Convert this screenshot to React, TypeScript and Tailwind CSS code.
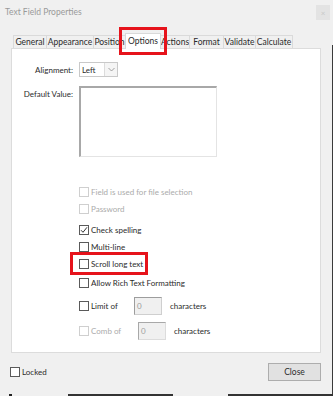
import React from 'react';

const tabs: [string, number][] = [
  ['General', 34],
  ['Appearance', 48],
  ['Position', 33],
  ['Options', 36],
  ['Actions', 30],
  ['Format', 35],
  ['Validate', 33],
  ['Calculate', 38],
];

const Box = ({ checked = false, disabled = false }: { checked?: boolean; disabled?: boolean }) => (
  <span
    className={`w-[10px] h-[10px] shrink-0 border bg-white flex items-center justify-center ${
      disabled ? 'border-[#cfcfcf]' : 'border-[#5a5a5a]'
    }`}
  >
    {checked && (
      <svg width="8" height="8" viewBox="0 0 8 8">
        <path d="M1 4.2 L3 6.3 L7 1.3" fill="none" stroke="#333" strokeWidth="1" />
      </svg>
    )}
  </span>
);

const CheckRow = ({
  label,
  checked,
  disabled,
  className = '',
}: {
  label: string;
  checked?: boolean;
  disabled?: boolean;
  className?: string;
}) => (
  <div className={`flex items-center h-[17px] gap-[2px] ${className}`}>
    <Box checked={checked} disabled={disabled} />
    <span className={disabled ? 'text-[#ababab]' : 'text-[#2b2b2b]'}>{label}</span>
  </div>
);

const App = () => {
  return (
    <div
      className="w-[333px] h-[396px] bg-[#f0f0f0] relative overflow-hidden text-[8px] text-[#2b2b2b]"
      style={{ fontFamily: 'Lato, "Noto Sans", sans-serif' }}
    >
      {/* title bar */}
      <div className="h-[25px] flex items-center justify-between pl-[5px] pr-[3px]">
        <span className="text-[8.5px] text-[#9a9a9a]">Text Field Properties</span>
        <div className="w-[14px] h-[15px] bg-[#e3e3e3] flex items-center justify-center text-[8px] text-[#c8c8c8]">
          ×
        </div>
      </div>

      {/* tabs */}
      <div className="flex items-end h-[23px] pl-[13px] text-[8.5px]">
        {tabs.map(([t, w]) =>
          t === 'Options' ? (
            <div
              key={t}
              style={{ width: w }}
              className="relative h-[16px] bg-white border border-b-0 border-[#d9d9d9] flex items-center justify-center -ml-px -mb-px z-10"
            >
              {t}
              <div className="absolute -left-[7px] -right-[7px] -top-[7px] -bottom-[6px] border-[3px] border-[#e6131b]" />
            </div>
          ) : (
            <div
              key={t}
              style={{ width: w }}
              className="h-[13px] bg-[#f0f0f0] border border-b-0 border-[#dadada] flex items-center justify-center overflow-hidden whitespace-nowrap -ml-px first:ml-0"
            >
              {t}
            </div>
          )
        )}
      </div>

      {/* panel */}
      <div className="ml-[11px] w-[310px] h-[305px] bg-white border border-[#dcdcdc]">
        <div className="flex items-center mt-[13px]">
          <span className="w-[61px] text-right">Alignment:</span>
          <div className="ml-[6px] w-[39px] h-[15px] border border-[#c9c9c9] flex">
            <span className="flex-1 pl-[2px] flex items-center">Left</span>
            <span className="w-[13px] border-l border-[#dcdcdc] bg-[#f5f5f5] flex items-center justify-center">
              <svg width="7" height="5" viewBox="0 0 7 5">
                <path d="M0.5 1 L3.5 4 L6.5 1" fill="none" stroke="#8a8a8a" strokeWidth="0.8" />
              </svg>
            </span>
          </div>
        </div>

        <div className="flex mt-[9px]">
          <span className="w-[61px] text-right pt-[2px]">Default Value:</span>
          <div className="ml-[6px] w-[138px] h-[71px] border border-[#e4e4e4] border-t-[#a8a8a8] border-l-[#a8a8a8] border-l-2 border-t-2" />
        </div>

        <div className="pl-[67px] mt-[26px]">
          <CheckRow label="Field is used for file selection" disabled />
          <CheckRow label="Password" disabled />
          <CheckRow label="Check spelling" checked className="mt-[4px]" />
          <CheckRow label="Multi-line" />
          <div className="relative w-fit">
            <CheckRow label="Scroll long text" className="h-[16px]" />
            <div className="absolute -left-[9px] -right-[5px] -top-[3px] -bottom-[3px] border-[3px] border-[#e6131b]" />
          </div>
          <CheckRow label="Allow Rich Text Formatting" className="mt-[2px]" />

          <div className="flex items-center h-[18px] mt-[6px]">
            <Box />
            <span className="ml-[2px] w-[43px]">Limit of</span>
            <div className="w-[28px] h-[18px] bg-[#f0f0f0] border border-[#cfcfcf] border-l-[#9d9d9d] border-t-[#9d9d9d] pl-[2px] flex items-center text-[#9a9a9a]">
              0
            </div>
            <span className="ml-[8px]">characters</span>
          </div>

          <div className="flex items-center h-[18px] mt-[7px] text-[#ababab]">
            <Box disabled />
            <span className="ml-[2px] w-[47px]">Comb of</span>
            <div className="w-[28px] h-[18px] bg-[#f0f0f0] border border-[#dcdcdc] border-l-[#a8a8a8] border-t-[#a8a8a8] pl-[2px] flex items-center text-[#a0a0a0]">
              0
            </div>
            <span className="ml-[8px] text-[#2b2b2b]">characters</span>
          </div>
        </div>
      </div>

      {/* footer */}
      <div className="flex items-center justify-between pl-[10px] pr-[12px] mt-[10px]">
        <div className="flex items-center gap-[2px]">
          <Box />
          <span>Locked</span>
        </div>
        <button className="w-[53px] h-[18px] bg-[#e1e1e1] border border-[#adadad] text-[8.5px] text-[#2b2b2b]">
          Close
        </button>
      </div>

      {/* screen edge behind the window */}
      <div className="absolute right-0 top-[45px] bottom-0 w-px bg-[#3a3a3a]" />
      <div className="absolute left-0 right-0 bottom-0 h-[2px] flex">
        <span className="w-[9px] bg-[#f0f0f0]" />
        <span className="w-[3px] bg-[#222]" />
        <span className="w-[56px] bg-[#f0f0f0]" />
        <span className="w-[105px] bg-[#333]" />
        <span className="w-[55px] bg-[#f0f0f0]" />
        <span className="w-[105px] bg-[#333]" />
      </div>
    </div>
  );
};

export default App;
